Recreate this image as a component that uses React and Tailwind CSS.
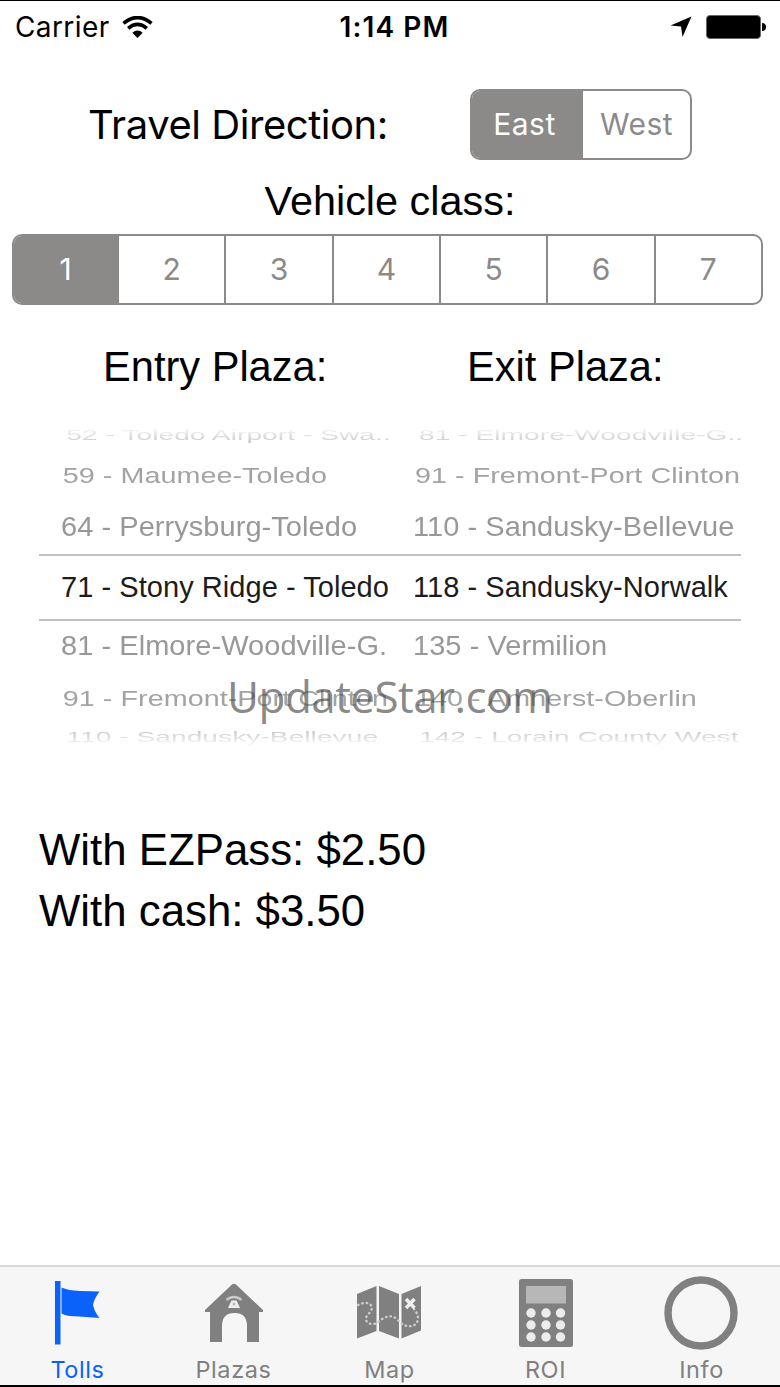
import React, { useState } from "react";

const entryPlazas = [
  "52 - Toledo Airport - Swa..",
  "59 - Maumee-Toledo",
  "64 - Perrysburg-Toledo",
  "71 - Stony Ridge - Toledo",
  "81 - Elmore-Woodville-G.",
  "91 - Fremont-Port Clinton",
  "110 - Sandusky-Bellevue",
];

const exitPlazas = [
  "81 - Elmore-Woodville-G..",
  "91 - Fremont-Port Clinton",
  "110 - Sandusky-Bellevue",
  "118 - Sandusky-Norwalk",
  "135 - Vermilion",
  "140 - Amherst-Oberlin",
  "142 - Lorain County West",
];

// the wheel gets flatter and fainter towards its edges
const wheelRows = [
  "h-[27px] pl-[6px] text-[#b8b8b8] [mask-image:linear-gradient(transparent_15%,black_95%)]",
  "h-[52px] pl-[2px] text-[#a3a3a3]",
  "h-[53px] text-[#989898]",
  "h-[67px] border-y-2 border-[#c0c0c0] text-[#1c1c1c]",
  "h-[50px] text-[#989898]",
  "h-[54px] pl-[2px] text-[#a3a3a3]",
  "h-[24px] pl-[6px] text-[#b8b8b8] [mask-image:linear-gradient(black_5%,transparent_90%)]",
];

const wheelText = [
  "scale-x-[0.97] scale-y-[0.52]",
  "scale-x-[0.99] scale-y-[0.77]",
  "scale-y-[0.93]",
  "",
  "scale-y-[0.93]",
  "scale-x-[0.99] scale-y-[0.77]",
  "scale-x-[0.97] scale-y-[0.52]",
];

const WifiIcon = () => (
  <svg className="ml-3 h-[23px] w-[31px]" viewBox="0 0 31 23" fill="none">
    <path d="M1.500 7.300 Q15.500 -4.200 29.500 7.300" stroke="black" strokeWidth="3.600" />
    <path d="M6.200 12.300 Q15.500 4.500 24.800 12.300" stroke="black" strokeWidth="3.600" />
    <path d="M10.300 16.800 Q15.500 12 20.700 16.800 L15.500 22 Z" fill="black" />
  </svg>
);

const FlagIcon = () => (
  <svg className="h-[64px] w-[46px]" viewBox="0 0 46 64" fill="#0b62fb">
    <path d="M0 0H5.500V63.500H0Z" />
    <path d="M6.500 6.500 Q13 9.500 25 10 L44.500 10.500 Q39 18 38 24 Q40 32 44.500 37 L24 35.500 Q11 35.500 6.500 32.500 Z" />
  </svg>
);

const PlazaIcon = () => (
  <svg className="h-[60px] w-[58px]" viewBox="0 0 58 60">
    <path fill="#808080" d="M27 1.500 Q29 0 31 1.500 L58 27 V29 H54 V59 H42 V43 Q42 30 29.500 30 Q17 30 17 43 V59 H5 V29 H0 V27 Z" />
    <path d="M22.500 17.500 V16 Q29 12 35.500 16 V17.500" fill="none" stroke="#ccc" strokeWidth="2.400" />
    <path d="M26.500 17.500 H31.500 L35 25 H23 Z" fill="#eee" />
    <circle cx="29" cy="21" r="1.500" fill="#bbb" />
  </svg>
);

const MapIcon = () => (
  <svg className="mr-0.5 h-[53px] w-[64px]" viewBox="0 0 64 53">
    <path fill="#808080" d="M0 8 L19.500 0 V45 L0 52.500 Z M22 0 L42 8 V52.500 L22 45 Z M44.500 8 L64 0 V44.500 L44.500 52.500 Z" />
    <path
      d="M1 19 C7 16 13 16 15 21 C15 27 8 29 9 34 C11 39 18 39 21 36 C28 30 35 28 41 34 C48 43 60 42 61 33 C61 28 59 26 57 23"
      fill="none"
      stroke="#ccc"
      strokeWidth="2.400"
      strokeLinecap="round"
      strokeDasharray="0.500 4"
    />
    <path d="M49 13 L57.500 22 M57.500 13 L49 22" stroke="#f0f0f0" strokeWidth="3.400" />
  </svg>
);

const CalculatorIcon = () => (
  <svg className="h-[68px] w-[54px]" viewBox="0 0 54 68">
    <rect width="54" height="68" rx="2.500" fill="#808080" />
    <rect x="7" y="7" width="40" height="17.500" fill="#b7b7b7" />
    {[34, 46, 58].map((y) =>
      [12, 27, 41.5].map((x) => (
        <circle key={`${x}-${y}`} cx={x} cy={y} r="4.700" fill="#ececec" />
      ))
    )}
  </svg>
);

const InfoIcon = () => (
  <svg className="mr-0.5 h-[74px] w-[74px]" viewBox="0 0 74 74">
    <circle cx="37" cy="37" r="33" fill="none" stroke="#808080" strokeWidth="7.400" />
  </svg>
);

const tabs = [
  { name: "Tolls", Icon: FlagIcon },
  { name: "Plazas", Icon: PlazaIcon },
  { name: "Map", Icon: MapIcon },
  { name: "ROI", Icon: CalculatorIcon },
  { name: "Info", Icon: InfoIcon },
];

const Segmented = ({ items, selected, onSelect, className, firstClass }) => (
  <div
    className={`flex overflow-hidden rounded-[10px] border-[2.5px] border-[#8c8a88] font-[Inter,sans-serif] text-[30px] ${className}`}
  >
    {items.map((item, i) => (
      <button
        key={item}
        onClick={() => onSelect(item)}
        className={`${i > 0 ? "flex-1 border-l-2 border-[#8c8a88]" : firstClass} ${
          item === selected ? "bg-[#8c8a88] text-white" : "text-[#8c8a88]"
        }`}
      >
        {item}
      </button>
    ))}
  </div>
);

const Wheel = ({ items, className, textClass }) => (
  <div className={`text-[29px] leading-none tracking-[0.05px] whitespace-nowrap ${className}`}>
    {items.map((item, i) => (
      <div key={item} className={`flex items-center ${wheelRows[i]}`}>
        <span className={`origin-left ${wheelText[i]} ${textClass}`}>{item}</span>
      </div>
    ))}
  </div>
);

const App = () => {
  const [direction, setDirection] = useState("East");
  const [vehicle, setVehicle] = useState("1");
  const [tab, setTab] = useState("Tolls");

  return (
    <div className="flex h-[1387px] w-[780px] flex-col overflow-hidden border-t border-b-2 border-black bg-white font-['Liberation_Sans',Arial,sans-serif] text-black">
      {/* Status bar */}
      <div className="grid h-[52px] grid-cols-3 items-center px-[15px] font-[Inter,sans-serif] text-[28px] leading-none">
        <div className="flex items-center">
          <span className="tracking-[0.4px]">Carrier</span>
          <WifiIcon />
        </div>
        <span className="pl-[9px] text-center font-semibold tracking-[1.1px]">1:14 PM</span>
        <div className="flex items-center justify-end">
          <svg className="mr-[14px] h-[22px] w-[22px]" viewBox="0 0 22 22">
            <path d="M21.500 0.500 L12.500 21 L11 10.500 L0.500 9.500 Z" fill="black" />
          </svg>
          <div className="h-[24px] w-[55px] rounded-[4px] border border-[#666] bg-black" />
          <div className="mr-[-1px] ml-px h-[8px] w-[4px] rounded-r-full bg-black" />
        </div>
      </div>

      {/* Direction */}
      <div className="mt-9 flex h-[71px] items-center pl-[88px]">
        <span className="w-[382px] font-[Inter,sans-serif] text-[40px] tracking-[-0.45px]">Travel Direction:</span>
        <Segmented
          items={["East", "West"]}
          selected={direction}
          onSelect={setDirection}
          className="h-[71px] w-[222px] tracking-[0.5px]"
          firstClass="w-[109px] pr-1"
        />
      </div>

      {/* Vehicle class */}
      <h2 className="mt-[11px] h-[63px] text-center text-[41.4px] leading-[60px]">Vehicle class:</h2>
      <Segmented
        items={["1", "2", "3", "4", "5", "6", "7"]}
        selected={vehicle}
        onSelect={setVehicle}
        className="ml-3 h-[71px] w-[751px]"
        firstClass="w-[103px]"
      />

      {/* Plazas */}
      <div className="mt-8 flex h-[60px] items-center text-[41.6px]">
        <h2 className="w-[364px] pl-[103px]">Entry Plaza:</h2>
        <h2 className="pl-[103px]">Exit Plaza:</h2>
      </div>
      <div className="relative mx-[39px] mt-[25px] flex h-[327px]">
        <Wheel items={entryPlazas} className="w-[372px]" textClass="pl-[22px]" />
        <Wheel items={exitPlazas} className="w-[330px]" textClass="pl-[2px]" />
        <span className="absolute top-[244px] left-[188px] font-['Open_Sans',sans-serif] text-[44px] leading-[60px] tracking-[-0.55px] text-[#444]/65">
          UpdateStar.com
        </span>
      </div>

      {/* Prices */}
      <div className="mt-[70px] pl-[39px] text-[43.8px] leading-[61px]">
        <p>With EZPass: $2.50</p>
        <p>With cash: $3.50</p>
      </div>

      {/* Tab bar */}
      <div className="mt-auto grid h-[120px] grid-cols-5 border-t-2 border-[#d8d8d8] bg-[#f6f6f6]">
        {tabs.map(({ name, Icon }) => (
          <button
            key={name}
            onClick={() => setTab(name)}
            className={`flex flex-col items-center font-[Inter,sans-serif] text-[23.5px] tracking-[0.6px] ${
              name === tab ? "text-[#0b62fb]" : "text-[#808080]"
            }`}
          >
            <span className="flex h-[91px] items-center">
              <Icon />
            </span>
            <span className="pr-px leading-[24px]">{name}</span>
          </button>
        ))}
      </div>
    </div>
  );
};

export default App;
